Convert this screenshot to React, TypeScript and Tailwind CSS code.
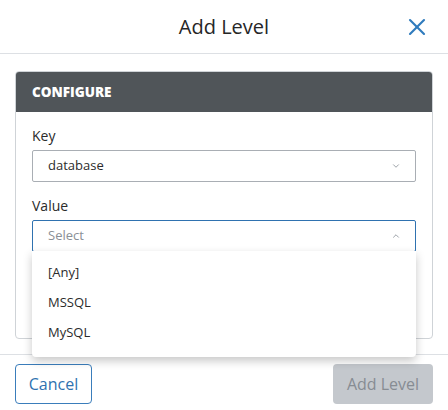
import { ChevronDown, ChevronUp, X } from "lucide-react";

const options = ["[Any]", "MSSQL", "MySQL"];

export default function App() {
  return (
    <div className="w-[448px] h-[410px] bg-white relative overflow-hidden font-['Open_Sans',sans-serif] text-[#2b2b2b]">
      {/* Header */}
      <div className="h-[54px] border-b border-[#dde0e4] flex items-center justify-center relative">
        <h2 className="text-[20px] leading-none text-[#262626]">Add Level</h2>
        <button className="absolute right-[17px] top-[13px] text-[#2f7bbd]">
          <X className="h-[28px] w-[28px]" strokeWidth={1.8} />
        </button>
      </div>

      {/* Body */}
      <div className="px-[15px] pt-[17px] h-[300px]">
        <div className="rounded-[4px] border border-[#cfd3d7] overflow-hidden">
          <div className="h-[40px] bg-[#505559] px-[16px] flex items-center">
            <span className="text-[13.5px] font-extrabold text-white">CONFIGURE</span>
          </div>
          <div className="px-[16px] pt-[14px] pb-[86px]">
            <label className="block text-[14px] leading-[20px] mb-[4px]">Key</label>
            <div className="h-[32px] border border-[#a9aeb4] rounded-[2px] flex items-center justify-between pl-[15px] pr-[14px]">
              <span className="text-[13px] text-[#2b2b2b]">database</span>
              <ChevronDown className="h-[10px] w-[10px] text-[#8a9097]" strokeWidth={2} />
            </div>
            <label className="block text-[14px] leading-[20px] mt-[14px] mb-[4px]">Value</label>
            <div className="h-[32px] border border-[#2f72b0] rounded-[2px] flex items-center justify-between pl-[15px] pr-[14px]">
              <span className="text-[13px] text-[#8a8f96]">Select</span>
              <ChevronUp className="h-[10px] w-[10px] text-[#8a9097]" strokeWidth={2} />
            </div>
          </div>
        </div>
      </div>

      {/* Footer */}
      <div className="border-t border-[#dde0e4] px-[15px] pt-[9px] flex items-center justify-between">
        <button className="h-[40px] w-[77px] rounded-[4px] border border-[#3a7dbb] text-[16px] text-[#2f72b0]">
          Cancel
        </button>
        <button className="h-[40px] w-[100px] rounded-[4px] bg-[#c4c8cd] text-[16px] text-[#878c93]">
          Add Level
        </button>
      </div>

      {/* Open dropdown menu */}
      <div className="absolute left-[32px] top-[251px] w-[384px] h-[106px] bg-white rounded-b-[4px] shadow-[0_4px_10px_rgba(0,0,0,0.22)] pt-[7px]">
        {options.map((o) => (
          <div key={o} className="h-[30px] flex items-center px-[16px] text-[13px] text-[#2b2b2b]">
            {o}
          </div>
        ))}
      </div>
    </div>
  );
}
